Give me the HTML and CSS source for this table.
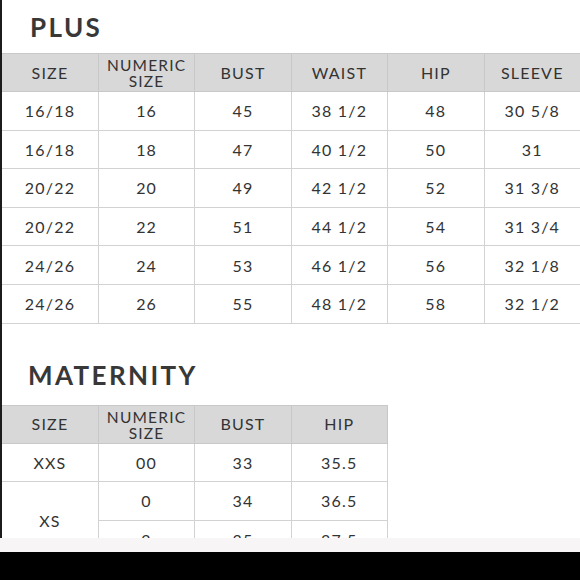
FILE: index.html
```html
<!DOCTYPE html>
<html>
<head>
<meta charset="utf-8">
<link rel="stylesheet" href="styles.css">
</head>
<body>
<div class="screen">
  <div class="content">
    <h2 class="title title-plus">PLUS</h2>
    <table class="chart chart-plus">
      <thead>
        <tr><th>SIZE</th><th class="two">NUMERIC<br>SIZE</th><th>BUST</th><th>WAIST</th><th>HIP</th><th>SLEEVE</th></tr>
      </thead>
      <tbody>
        <tr><td>16/18</td><td>16</td><td>45</td><td>38 1/2</td><td>48</td><td>30 5/8</td></tr>
        <tr><td>16/18</td><td>18</td><td>47</td><td>40 1/2</td><td>50</td><td>31</td></tr>
        <tr><td>20/22</td><td>20</td><td>49</td><td>42 1/2</td><td>52</td><td>31 3/8</td></tr>
        <tr><td>20/22</td><td>22</td><td>51</td><td>44 1/2</td><td>54</td><td>31 3/4</td></tr>
        <tr><td>24/26</td><td>24</td><td>53</td><td>46 1/2</td><td>56</td><td>32 1/8</td></tr>
        <tr><td>24/26</td><td>26</td><td>55</td><td>48 1/2</td><td>58</td><td>32 1/2</td></tr>
      </tbody>
    </table>
    <h2 class="title title-mat">MATERNITY</h2>
    <table class="chart chart-mat">
      <thead>
        <tr><th>SIZE</th><th class="two">NUMERIC<br>SIZE</th><th>BUST</th><th>HIP</th></tr>
      </thead>
      <tbody>
        <tr><td>XXS</td><td>00</td><td>33</td><td>35.5</td></tr>
        <tr><td rowspan="2">XS</td><td>0</td><td>34</td><td>36.5</td></tr>
        <tr><td>2</td><td>35</td><td>37.5</td></tr>
      </tbody>
    </table>
  </div>
  <div class="strip"></div>
  <div class="bar"></div>
</div>
</body>
</html>
```
FILE: styles.css
```css
html, body {
  margin: 0;
  padding: 0;
  background: #000;
}
.screen {
  width: 580px;
  height: 580px;
  display: flex;
  flex-direction: column;
}
.content {
  height: 538px;
  overflow: hidden;
  background: #fff;
  border-left: 2px solid #1c1c1c;
  box-sizing: border-box;
  font-family: Lato, "Liberation Sans", sans-serif;
  color: #333;
}
.strip {
  height: 14px;
  background: #f7f5f5;
}
.bar {
  flex: 1;
  background: #000;
}
.title {
  margin: 0;
  font-size: 26px;
  font-weight: 700;
  letter-spacing: 2.4px;
  color: #383838;
}
.title-plus {
  height: 53px;
  line-height: 54px;
  padding-left: 28px;
}
.title-mat {
  height: 81px;
  box-sizing: border-box;
  padding-top: 21px;
  line-height: 60px;
  padding-left: 26px;
  overflow: hidden;
}
.chart {
  border-collapse: collapse;
  table-layout: fixed;
  font-size: 16px;
  letter-spacing: 1.2px;
}
.chart-plus {
  width: 579px;
}
.chart-mat {
  width: 386px;
}
.chart th, .chart td {
  border: 1px solid #d2d2d2;
  text-align: center;
  padding: 0;
  font-weight: 400;
}
.chart th {
  background: #d8d8d8;
  height: 36px;
  line-height: 16px;
  border-color: #c8c8c8;
}
.chart th.two {
  line-height: 16px;
  font-size: 15.5px;
  padding-top: 1px;
}
.chart td {
  height: 37.6px;
}
.chart tr > :first-child {
  border-left: none;
}
```
